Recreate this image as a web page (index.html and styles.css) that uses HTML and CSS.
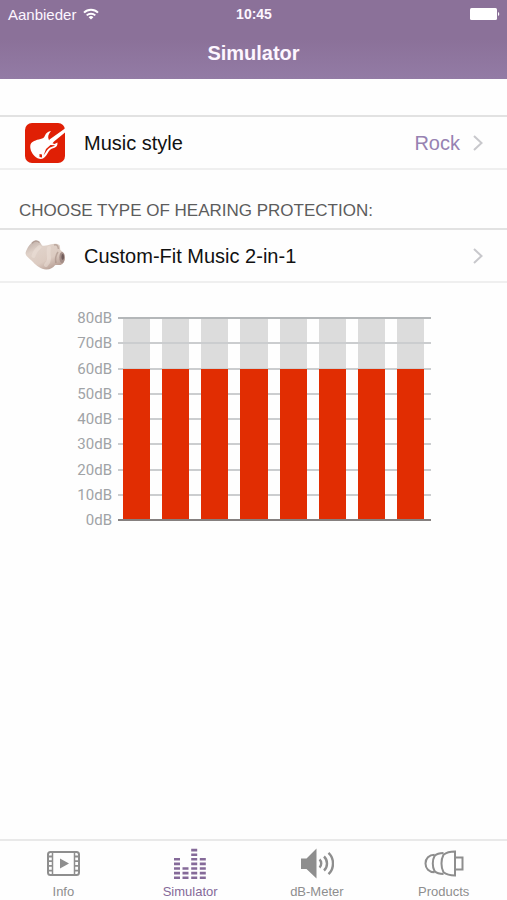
FILE: index.html
```
<!DOCTYPE html>
<html lang="en">
<head>
    <meta charset="UTF-8">
    <meta name="viewport" content="width=device-width, initial-scale=1.0">
    <title>Simulator</title>
    <link rel="stylesheet" href="styles.css">
</head>
<body>
    <header class="header">
        <div class="status">
            <div class="carrier">
                <span>Aanbieder</span>
                <svg width="16" height="12" viewBox="0 0 16 12" fill="none" stroke="#fff" stroke-width="2">
                    <path d="M1 4.600a10 10 0 0 1 14 0M3.700 7.400a6.200 6.200 0 0 1 8.600 0"/>
                    <path d="M8 11.500L5.600 9.200a3.400 3.400 0 0 1 4.800 0z" fill="#fff" stroke="none"/>
                </svg>
            </div>
            <span class="time">10:45</span>
            <svg class="battery" width="30" height="12" viewBox="0 0 30 12" fill="#fff">
                <rect width="27" height="12" rx="1.5"/>
                <path d="M28 4a2.200 2.200 0 0 1 0 4z"/>
            </svg>
        </div>
        <h1>Simulator</h1>
    </header>

    <main>
        <button class="row" type="button">
            <svg class="thumb" width="42" height="42" viewBox="0 0 42 42">
                <rect x="1" y="1" width="40" height="40" rx="7" fill="#e01f05"/>
                <path d="M41 6.500L25.500 17.500 24 21l3.500 1.500 2.500-3L41 10.500z" fill="#fff"/>
                <path d="M27 9c-3 .5-5 2-6 4.500-1 2.300-2 3-4.500 3.500C12 18 7.500 19.500 6.500 22.500c-1 4 1 8.500 4 11.500 2.500 2.500 6 3.700 8.500 2.500 3-1.500 4-4.500 6-7.500 1.500-2 3.500-2.500 5.500-3.200 2-.8 3.200-2.500 3-5.300l-3 1.500-4-1.500-1.800-3C23.500 14.500 24.500 12 27 9z" fill="#fff"/>
                <path d="M19.500 33.500c2.500-3 3.500-6.500 6.500-8 1.800-.8 4-1 5-2.300l-4.500-.2-4.500 4z" fill="#e01f05"/>
                <path d="M15.500 32l2.500.5v3l-2.500-.5z" fill="#e01f05"/>
            </svg>
            <span class="name">Music style</span>
            <span class="value">Rock</span>
            <svg class="chevron" width="10" height="16" viewBox="0 0 10 16"><path d="M1 1l7.500 7L1 15"/></svg>
        </button>

        <h2>CHOOSE TYPE OF HEARING PROTECTION:</h2>

        <button class="row" type="button">
            <svg class="thumb" width="42" height="42" viewBox="0 0 42 42">
                <defs>
                    <linearGradient id="skin" x1="0" y1="0" x2=".7" y2="1">
                        <stop offset="0" stop-color="#b5a49d"/>
                        <stop offset=".35" stop-color="#e0d2c9"/>
                        <stop offset=".7" stop-color="#dccbc1"/>
                        <stop offset="1" stop-color="#b59c92"/>
                    </linearGradient>
                </defs>
                <path d="M1.500 18C3 12.500 7 7 11.500 5.500c3-.6 5.300 2 6.500 5 3 .8 6-.5 9-1.200 3-.8 6-.8 8.500.7.700 1.500.5 3 .8 5 2.800 1.600 4.700 4 4.700 7.500s-1.600 6.500-4.500 7.500c-2 .4-4-.5-5.500.2-2 2.500-5 4.500-9 4.300-5-.4-9.500-3.500-13-7.500C5.500 23 1.500 21.500 1.500 18z" fill="url(#skin)"/>
                <path d="M15.500 12c-3 2.500-5 5-6 9M25 13c-1 4 0 8 0 11 0 3-1 4-3 6" fill="none" stroke="#ede2da" stroke-width="4" stroke-linecap="round" opacity=".5"/>
                <path d="M8 8.200c2-2.400 5-3.300 7.500-.7M30 10c3-1 4 1 4.500 4M32 28c-1-4 0-8 2-11" fill="none" stroke="#9a8178" stroke-width="1.500" opacity=".5"/>
                <ellipse cx="38" cy="22.500" rx="2.600" ry="5.500" fill="#a38d87"/>
                <ellipse cx="38.700" cy="22" rx="1.300" ry="3" fill="#705b5a"/>
            </svg>
            <span class="name">Custom-Fit Music 2-in-1</span>
            <svg class="chevron" width="10" height="16" viewBox="0 0 10 16"><path d="M1 1l7.500 7L1 15"/></svg>
        </button>

        <div class="chart">
            <div class="scale">
                <span>80dB</span>
                <span>70dB</span>
                <span>60dB</span>
                <span>50dB</span>
                <span>40dB</span>
                <span>30dB</span>
                <span>20dB</span>
                <span>10dB</span>
                <span>0dB</span>
            </div>
            <div class="plot">
                <div class="bars">
                    <div class="bar"><div class="level" style="height: 75%"></div></div>
                    <div class="bar"><div class="level" style="height: 75%"></div></div>
                    <div class="bar"><div class="level" style="height: 75%"></div></div>
                    <div class="bar"><div class="level" style="height: 75%"></div></div>
                    <div class="bar"><div class="level" style="height: 75%"></div></div>
                    <div class="bar"><div class="level" style="height: 75%"></div></div>
                    <div class="bar"><div class="level" style="height: 75%"></div></div>
                    <div class="bar"><div class="level" style="height: 75%"></div></div>
                </div>
                <div class="lines">
                    <i></i><i></i><i></i><i></i><i></i><i></i><i></i><i></i>
                </div>
                <div class="axis"></div>
            </div>
        </div>
    </main>

    <nav class="tabs">
        <a href="#info">
            <svg width="34" height="32" viewBox="0 0 34 32">
                <rect x="2" y="5" width="31" height="23" rx="2.500" fill="none" stroke="#8e8e8e" stroke-width="2"/>
                <path d="M6.500 5v23M28.500 5v23" stroke="#8e8e8e" stroke-width="1.500"/>
                <path d="M2 9.500h4.500M2 14.200h4.500M2 18.900h4.500M2 23.600h4.500M28.500 9.500H33M28.500 14.200H33M28.500 18.900H33M28.500 23.600H33" stroke="#8e8e8e" stroke-width="1.800"/>
                <path d="M14 11.500l9 5-9 5z" fill="#8e8e8e"/>
            </svg>
            <span>Info</span>
        </a>
        <a href="#simulator" class="active">
            <svg width="34" height="32" viewBox="0 0 34 32" fill="none" stroke="#856a99" stroke-width="6" stroke-dasharray="2.600 2">
                <path d="M4 32V10M12.500 32V19M21.200 32V1M29.800 32V10"/>
            </svg>
            <span>Simulator</span>
        </a>
        <a href="#db-meter">
            <svg width="34" height="32" viewBox="0 0 34 32">
                <path d="M1 11.500h5.500L16.500 1.500v30l-10-9.500H1z" fill="#8e8e8e"/>
                <path d="M19.500 12.500c2.300 2 2.300 6 0 8M24 9.500c4 3.700 4 10.300 0 14M28.500 5.800c6 5.500 6 15.900 0 21.400" fill="none" stroke="#8e8e8e" stroke-width="2.400"/>
            </svg>
            <span>dB-Meter</span>
        </a>
        <a href="#products">
            <svg width="40" height="32" viewBox="0 0 40 32" fill="none" stroke="#8e8e8e" stroke-width="2">
                <path d="M31 4.500v24c-5 0-9-1.200-11.500-3.200-2.700-5-2.700-12.600 0-17.600C22 5.700 26 4.500 31 4.500z"/>
                <path d="M19.500 6c-4 0-7 1-9 3-2.300 4.300-2.300 10.700 0 15 2 2 5 3 9 3M10.500 7.800C5 7.800 1.500 11.500 1.500 16.500s3.500 8.700 9 8.700"/>
                <path d="M31 10.500h7.500v12H31"/>
            </svg>
            <span>Products</span>
        </a>
    </nav>
</body>
</html>
```
FILE: styles.css
```
* {
    box-sizing: border-box;
}

body {
    margin: 0;
    min-height: 100vh;
    display: flex;
    flex-direction: column;
    background-color: #fefefe;
    font-family: "Liberation Sans", Arial, sans-serif;
    color: #111;
}

.header {
    padding-bottom: 12px;
    background: linear-gradient(#8b7199 50%, #937ba5);
    color: #fdf6ff;
    text-align: center;
}

.status {
    display: grid;
    grid-template-columns: 1fr auto 1fr;
    align-items: center;
    height: 28px;
    padding: 0 7px 0 8px;
    font-size: 15px;
}

.carrier {
    display: flex;
    align-items: center;
    gap: 7px;
}

.time {
    font-size: 14px;
    font-weight: bold;
}

.battery {
    justify-self: end;
}

h1 {
    margin: 12px 0 0;
    font-size: 20px;
    line-height: 27px;
}

main {
    flex: 1;
    padding-top: 36px;
}

.row {
    display: flex;
    align-items: center;
    width: 100%;
    height: 55px;
    padding: 1px 24px 0;
    border: 0;
    border-top: 2px solid #e2e2e2;
    border-bottom: 2px solid #efefef;
    background: none;
    color: #111;
    font-family: inherit;
    font-size: 20px;
    text-align: left;
    cursor: pointer;
}

.thumb {
    margin-right: 18px;
}

.name {
    flex: 1;
}

.value {
    margin-right: 13px;
    color: #9782b2;
}

.chevron {
    fill: none;
    stroke: #c8c8cc;
    stroke-width: 2;
}

h2 {
    margin: 0;
    padding: 30px 19px 6px;
    font-size: 17px;
    font-weight: normal;
    line-height: 22px;
    color: #5c5c5c;
}

.chart {
    display: flex;
    gap: 6px;
    padding: 25px 76px;
}

/* labels are centred on the grid lines, so the scale is one line taller than the plot */
.scale {
    display: flex;
    flex-direction: column;
    justify-content: space-between;
    width: 36px;
    height: 222px;
    font-family: Roboto, sans-serif;
    font-size: 15px;
    line-height: 20px;
    text-align: right;
    color: #a0a3a6;
}

.plot {
    flex: 1;
    display: grid;
    height: 204px;
    margin-top: 9px;
}

.bars,
.lines,
.axis {
    grid-area: 1 / 1;
}

.bars {
    display: grid;
    grid-template-columns: repeat(8, 1fr);
    gap: 12px;
    padding: 1px 7px 1px 5px;
}

.bar {
    display: flex;
    align-items: flex-end;
    background-color: #dcdcdc;
}

.level {
    width: 100%;
    z-index: 2;
    background-color: #e12d02;
}

.lines {
    z-index: 1;
    display: flex;
    flex-direction: column;
    justify-content: space-between;
    padding-bottom: 25px;
}

.lines i {
    height: 2px;
    background-color: #cbcdcf;
}

.lines i:first-child {
    background-color: #b4b7b9;
}

.axis {
    z-index: 3;
    align-self: end;
    height: 2px;
    background-color: #85807f;
}

.tabs {
    display: flex;
    height: 61px;
    border-top: 2px solid #e9e9e9;
}

.tabs a {
    flex: 1;
    display: flex;
    flex-direction: column;
    align-items: center;
    gap: 4px;
    padding-top: 6px;
    font-size: 13px;
    line-height: 17px;
    color: #8e8e8e;
    text-decoration: none;
}

.tabs .active {
    color: #856a99;
}
```
